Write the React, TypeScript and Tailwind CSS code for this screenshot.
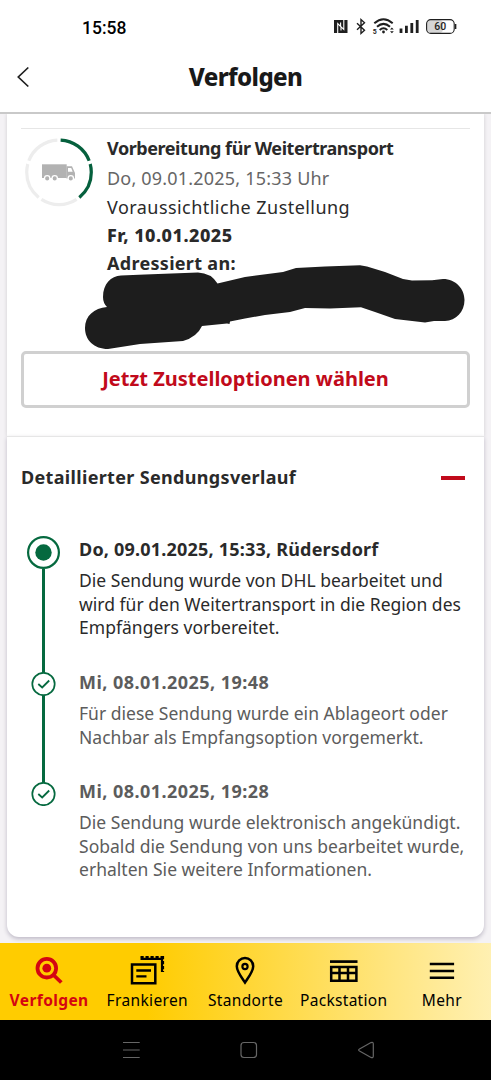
import React from 'react';

interface TrackingEvent {
    title: string;
    lines: string[];
    current?: boolean;
    titleClass: string;
    bodyClass: string;
    itemClass: string;
}

const events: TrackingEvent[] = [
    {
        title: 'Do, 09.01.2025, 15:33, Rüdersdorf',
        lines: [
            'Die Sendung wurde von DHL bearbeitet und',
            'wird für den Weitertransport in die Region des',
            'Empfängers vorbereitet.',
        ],
        current: true,
        titleClass: 'leading-[26px] tracking-[0.2px]',
        bodyClass: 'mt-[7px]',
        itemClass: 'h-[136px] text-[#2a2a2a]',
    },
    {
        title: 'Mi, 08.01.2025, 19:48',
        lines: ['Für diese Sendung wurde ein Ablageort oder', 'Nachbar als Empfangsoption vorgemerkt.'],
        titleClass: 'leading-[20px] tracking-[0.45px]',
        bodyClass: 'mt-[10px]',
        itemClass: 'h-[110px] text-[#5c5c5c]',
    },
    {
        title: 'Mi, 08.01.2025, 19:28',
        lines: [
            'Die Sendung wurde elektronisch angekündigt.',
            'Sobald die Sendung von uns bearbeitet wurde,',
            'erhalten Sie weitere Informationen.',
        ],
        titleClass: 'leading-[19px] tracking-[0.45px]',
        bodyClass: 'mt-[10px]',
        itemClass: 'text-[#5c5c5c]',
    },
];

function StatusIcons() {
    return (
        <svg width="126" height="20" viewBox="332 18 126 20" fill="none" className="text-[#1f1f1f]">
            {/* NFC */}
            <path d="M334 21H347.500V34H334Z" fill="currentColor" />
            <path d="M337.700 34V24.500L341 27.800V31.500M343.800 21V30.500L340.600 27.300V23.500" stroke="#fff" strokeWidth="1.100" />
            {/* Bluetooth */}
            <path d="M357 24.300L364.500 31.200L361 34.500V20.500L364.500 23.800L357 30.800" stroke="currentColor" strokeWidth="1.400" />
            {/* Wifi */}
            <g stroke="currentColor" strokeWidth="2">
                <path d="M374.300 24.300Q383.500 16.300 392.700 24.300" />
                <path d="M377 27.700Q383.500 22 390 27.700" />
                <path d="M379.700 31Q383.500 27.500 387.300 31" />
            </g>
            <circle cx="383.500" cy="33" r="1.400" fill="currentColor" />
            <text x="372.800" y="34.800" fontSize="7" fontWeight="700" fill="currentColor" className="font-['Roboto',sans-serif]">5</text>
            <path d="M390 30.600L391.900 28.600L393.800 30.600ZM390 32.200L391.900 34.200L393.800 32.200Z" fill="currentColor" />
            {/* Signal */}
            <path d="M401 34V29.500M406.400 34V26.800M411.800 34V24M417.200 34V21" stroke="currentColor" strokeWidth="2.800" />
            {/* Battery */}
            <rect x="427" y="21" width="16" height="13" rx="4" fill="#d6d6d6" />
            <rect x="426.600" y="20.600" width="27.600" height="13.800" rx="4.200" stroke="currentColor" strokeWidth="1.100" />
            <path d="M455.600 25V30" stroke="currentColor" strokeWidth="1.500" />
            <text x="440.300" y="31.400" textAnchor="middle" fontSize="10.500" fontWeight="500" fill="currentColor" className="font-['Roboto',sans-serif]">60</text>
        </svg>
    );
}

function TruckProgress() {
    return (
        <svg width="70" height="70" viewBox="24 137 70 70" fill="none">
            <g transform="rotate(-90 59 172.300)" strokeWidth="3.200">
                <circle cx="59" cy="172.300" r="32.300" pathLength="360" stroke="#ededed" strokeDasharray="66 6" strokeDashoffset="-3" />
                <circle cx="59" cy="172.300" r="32.300" pathLength="360" stroke="#05603d" strokeDasharray="66 6 66 222" strokeDashoffset="-3" />
            </g>
            <g fill="#b2b2b2">
                <path d="M42 164.300H66.700V178H42Z" />
                <path d="M66.500 166.300H72L74.300 171.500L75 173V178.500H66.500Z" />
            </g>
            <path d="M68 168H71.200L72.700 171.800H68Z" fill="#fff" />
            <g fill="#b2b2b2" stroke="#fff" strokeWidth="1.300">
                <circle cx="47.200" cy="178.400" r="2.700" />
                <circle cx="54.700" cy="178.400" r="2.700" />
                <circle cx="70.800" cy="178.400" r="2.700" />
            </g>
        </svg>
    );
}

function Marker({ current }: { current?: boolean }) {
    if (current) {
        return (
            <svg width="33" height="33" viewBox="0 0 33 33" fill="none" className="shrink-0">
                <circle cx="16.500" cy="16.500" r="15.400" stroke="#05693f" strokeWidth="2.200" />
                <circle cx="16.500" cy="16.500" r="8.200" fill="#05693f" />
            </svg>
        );
    }
    return (
        <svg width="25" height="24" viewBox="0 0 25 24" fill="none" className="shrink-0" stroke="#05693f">
            <circle cx="12.500" cy="12" r="11.200" strokeWidth="1.700" />
            <path d="M7.300 12L11.200 15.500L18.200 8.500" strokeWidth="1.800" />
        </svg>
    );
}

const tabs = [
    {
        label: 'Verfolgen',
        labelClass: 'font-bold text-[#d40511] tracking-[0.4px]',
        icon: (
            <g stroke="#d40511">
                <circle cx="17.800" cy="15.200" r="9.300" strokeWidth="3.800" />
                <circle cx="17.800" cy="15.200" r="4.400" fill="#d40511" stroke="none" />
                <path d="M24.500 22L32.300 29.500" strokeWidth="3.800" />
            </g>
        ),
    },
    {
        label: 'Frankieren',
        labelClass: 'tracking-[0.35px]',
        icon: (
            <g stroke="#000">
                <path d="M5 11.500H28.300V30.200H5Z" strokeWidth="2.500" />
                <path d="M9.300 17.500H24M9.300 23.300H19.500" strokeWidth="2.300" />
                {/* Perforated stamp edge */}
                <path d="M13.500 5.800H35V19" strokeWidth="2.200" />
                <path d="M13.500 4H36.500" strokeWidth="2" strokeDasharray="3.200 1.800" />
                <path d="M36.300 3V19" strokeWidth="1.600" strokeDasharray="3.200 1.800" />
            </g>
        ),
    },
    {
        label: 'Standorte',
        labelClass: 'tracking-[0.35px]',
        icon: (
            <g stroke="#000">
                <path d="M20 29.500C17 25 11.800 18.500 11.800 13.200A8.200 8.200 0 0 1 28.200 13.200C28.200 18.500 23 25 20 29.500Z" strokeWidth="2.500" />
                <circle cx="20" cy="13.500" r="2.600" strokeWidth="2.200" />
            </g>
        ),
    },
    {
        label: 'Packstation',
        labelClass: 'tracking-[0.3px]',
        icon: (
            <g stroke="#000" strokeWidth="2.500">
                <path d="M6 8.600H33.500" strokeWidth="2.700" />
                <path d="M7.200 14H32.400V27.700H7.200ZM7 20H33M15.500 14V28M24 14V28" />
            </g>
        ),
    },
    {
        label: 'Mehr',
        labelClass: 'tracking-[0.35px]',
        icon: <path d="M7.800 11H32.100M7.800 18H32.100M7.800 24.800H32.100" stroke="#000" strokeWidth="2.500" />,
    },
];

export default function App() {
    return (
        <div className="flex h-[1080px] w-[491px] flex-col overflow-hidden bg-[#f4f2f5] font-['Noto_Sans','Open_Sans',sans-serif] text-[#2a2a2a]">
            <header className="z-10 h-[114px] shrink-0 border-b-2 border-[#c9c9c9] bg-white">
                <div className="flex h-[54px] items-center justify-between pr-[33px] pl-[82px]">
                    <span className="pt-0.5 font-['Roboto',sans-serif] text-[17.5px] font-medium text-black">15:58</span>
                    <StatusIcons />
                </div>
                <div className="mt-0.5 grid h-[42px] grid-cols-[60px_1fr_60px] items-center">
                    <svg width="14" height="22" viewBox="0 0 14 22" fill="none" className="ml-4">
                        <path d="M12.300 1.500L2.300 11L12.300 20.500" stroke="#1f1f1f" strokeWidth="1.700" />
                    </svg>
                    <h1 className="text-center text-[24px] leading-8 font-extrabold tracking-[-0.6px] whitespace-nowrap text-[#191919]">Verfolgen</h1>
                </div>
            </header>

            <main className="flex-1 px-[7px]">
                <section className="relative h-[322px] bg-white px-[14px] pt-[14px] shadow-[0_0_4px_rgba(0,0,0,0.15)]">
                    <div className="flex border-t border-[#e6e6e6] pt-1">
                        <div className="w-[86px] pt-1 pl-[3px]">
                            <TruckProgress />
                        </div>
                        <div className="text-[18px] leading-[28px] whitespace-nowrap">
                            <p className="leading-[30px] font-bold tracking-[-0.44px]">Vorbereitung für Weitertransport</p>
                            <p className="leading-[30px] tracking-[0.2px] text-[#666]">Do, 09.01.2025, 15:33 Uhr</p>
                            <p className="tracking-[0.45px]">Voraussichtliche Zustellung</p>
                            <p className="font-extrabold tracking-[0.5px]">Fr, 10.01.2025</p>
                            <p className="font-bold tracking-[0.3px]">Adressiert an:</p>
                        </div>
                    </div>
                    <button className="mt-[74px] flex h-[57px] w-full items-center justify-center rounded-[5px] border-3 border-[#d0d0d0] pb-0.5 text-[20px] font-bold whitespace-nowrap text-[#c10a1b]">
                        Jetzt Zustelloptionen wählen
                    </button>
                    {/* Blacked-out recipient address */}
                    <svg width="384" height="88" viewBox="83 263 384 88" className="absolute top-[149px] left-[76px]">
                        <path
                            d="M103 297C103 284 111 276 121 275.500L145 274.500L198 272.500Q211 273 217.500 283.500L245 277L283 272L296 268L325 266.500L360 265.300L367 266.500L385 272L403 279L412 280.500L432 280.300L443 279C456 279 464.500 289 464.500 300C464.500 312 456 320.500 445 321L434 321L425 322.500L395 319L375 312L361 307.300L330 308.500L305 308L290 312L265 315L245 318.500L230 321.500L229.500 324L227 323.500L202 326Q197 337 183 341L140 344L108 349C94 349 85 340 85 328C85 316 94 308 107 307Q103 303 103 297Z"
                            fill="#1d1d1d"
                        />
                    </svg>
                </section>

                <section className="relative h-[501px] rounded-b-xl border-t border-[#e6e6e6] bg-white pr-[19px] pl-[14px] shadow-[0_2px_4px_rgba(30,20,60,0.25)]">
                    <div className="flex h-[82px] items-center justify-between">
                        <h2 className="pb-0.5 text-[18px] font-bold tracking-[0.33px] whitespace-nowrap">Detaillierter Sendungsverlauf</h2>
                        <span className="h-[4px] w-6 bg-[#c10a1b]" />
                    </div>
                    <ul className="mt-[17px]">
                        {events.map((event) => (
                            <li key={event.title} className={`flex ${event.itemClass}`}>
                                <div className="flex w-[58px] shrink-0 flex-col pl-[6px]">
                                    <div className="flex h-full w-[33px] flex-col items-center">
                                        <Marker current={event.current} />
                                        {event.itemClass.startsWith('h-') && <span className="w-[3px] flex-1 bg-[#05693f]" />}
                                    </div>
                                </div>
                                <div className="whitespace-nowrap">
                                    <h3 className={`text-[18px] font-bold ${event.titleClass}`}>{event.title}</h3>
                                    <div className={`text-[17.5px] leading-[23.6px] tracking-[0.02px] ${event.bodyClass}`}>
                                        {event.lines.map((line) => (
                                            <p key={line}>{line}</p>
                                        ))}
                                    </div>
                                </div>
                            </li>
                        ))}
                    </ul>
                </section>
            </main>

            <nav className="grid h-[77px] shrink-0 grid-cols-5 bg-[linear-gradient(90deg,#fc0_0%,#fc0_30%,#ffe57f_79%,#fff0b2_100%)] text-black">
                {tabs.map((tab) => (
                    <a key={tab.label} className="flex flex-col items-center pt-[10px]">
                        <svg width="40" height="36" viewBox="0 0 40 36" fill="none">
                            {tab.icon}
                        </svg>
                        <span className={`text-[15.5px] leading-[23px] whitespace-nowrap ${tab.labelClass}`}>{tab.label}</span>
                    </a>
                ))}
            </nav>

            <div className="h-[60px] shrink-0 bg-black">
                <svg width="491" height="60" viewBox="0 0 491 60" fill="none" stroke="#666" strokeWidth="1.200">
                    <path d="M123 22.500H139.700M123 30H139.700M123 37.500H139.700" />
                    <rect x="241" y="22.500" width="15.500" height="15" rx="3" />
                    <path d="M359.500 29L371 22.600Q373.300 21.600 373.300 24V36Q373.300 38.400 371 37.400L359.500 31Q357.800 30 359.500 29Z" />
                </svg>
            </div>
        </div>
    );
}
